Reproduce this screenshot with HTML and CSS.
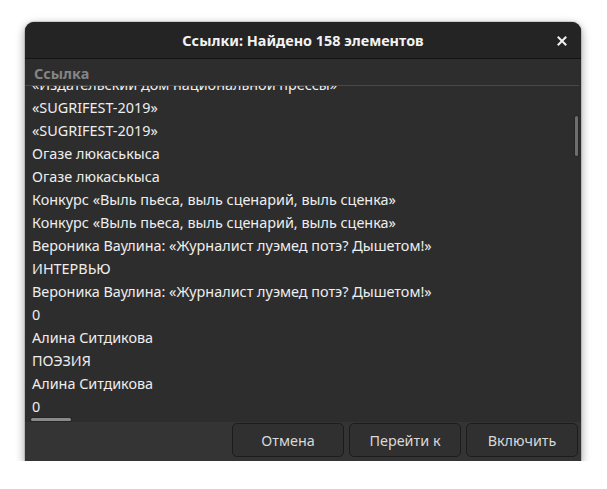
FILE: index.html
```html
<!DOCTYPE html>
<html lang="ru">
<head>
<meta charset="utf-8">
<title>Ссылки</title>
<link rel="stylesheet" href="styles.css">
</head>
<body>
<div class="dialog">
  <div class="titlebar">
    <span class="title">Ссылки: Найдено 158 элементов</span>
    <span class="close">
      <svg width="10" height="10" viewBox="0 0 10 10"><path d="M1.5 1.5 L8.5 8.5 M8.5 1.5 L1.5 8.5" stroke="#f2f2f2" stroke-width="2" stroke-linecap="square"/></svg>
    </span>
  </div>
  <div class="colhead">Ссылка</div>
  <div class="listwrap">
    <div class="list">
      <div class="row">«Издательский дом национальной прессы»</div>
      <div class="row">«SUGRIFEST-2019»</div>
      <div class="row">«SUGRIFEST-2019»</div>
      <div class="row">Огазе люкаськыса</div>
      <div class="row">Огазе люкаськыса</div>
      <div class="row">Конкурс «Выль пьеса, выль сценарий, выль сценка»</div>
      <div class="row">Конкурс «Выль пьеса, выль сценарий, выль сценка»</div>
      <div class="row">Вероника Ваулина: «Журналист луэмед потэ? Дышетом!»</div>
      <div class="row">ИНТЕРВЬЮ</div>
      <div class="row">Вероника Ваулина: «Журналист луэмед потэ? Дышетом!»</div>
      <div class="row">0</div>
      <div class="row">Алина Ситдикова</div>
      <div class="row">ПОЭЗИЯ</div>
      <div class="row">Алина Ситдикова</div>
      <div class="row">0</div>
      <div class="row">Ольга Ирина Марина Зайцева</div>
    </div>
    <div class="vscroll"></div>
    <div class="hscroll"></div>
  </div>
  <div class="actions">
    <button class="btn">Отмена</button>
    <button class="btn">Перейти к</button>
    <button class="btn">Включить</button>
  </div>
</div>
</body>
</html>
```
FILE: styles.css
```css
html, body {
  margin: 0;
  padding: 0;
  background: #ffffff;
}
body {
  font-family: "Noto Sans", "Open Sans", "DejaVu Sans", sans-serif;
  font-size: 14.4px;
  color: #eeeeee;
}
.dialog {
  margin: 22px 0 0 25px;
  width: 556px;
  height: 439px;
  background: #2d2d2d;
  border-radius: 9px 9px 0 0;
  box-shadow: 0 3px 9px 1px rgba(0,0,0,0.35), 0 0 0 1px rgba(0,0,0,0.12);
  display: flex;
  flex-direction: column;
  overflow: hidden;
}
.titlebar {
  height: 36px;
  flex: none;
  background: #242424;
  border-bottom: 1px solid #141414;
  display: flex;
  align-items: center;
  justify-content: center;
  position: relative;
}
.title {
  font-weight: bold;
  font-size: 14.4px;
  color: #f2f2f2;
}
.close {
  position: absolute;
  right: 14px;
  top: 14px;
  width: 10px;
  height: 10px;
  display: block;
}
.close svg { display: block; }
.colhead {
  height: 26px;
  flex: none;
  margin-right: 2px;
  border-bottom: 1px solid #484848;
  box-sizing: content-box;
  padding-left: 9px;
  font-weight: bold;
  color: #848484;
  line-height: 29px;
}
.listwrap {
  height: 336px;
  flex: none;
  position: relative;
  overflow: hidden;
}
.list {
  margin-top: -13px;
  padding-left: 7px;
}
.row {
  height: 23px;
  line-height: 23px;
  white-space: nowrap;
}
.vscroll {
  position: absolute;
  left: 550px;
  top: 30px;
  width: 3px;
  height: 40px;
  background: #6e6e6e;
  border-radius: 2px;
  box-shadow: 0 0 0 1px #262626;
}
.hscroll {
  position: absolute;
  left: 6px;
  top: 332px;
  width: 40px;
  height: 3px;
  background: #8a8a8a;
  border-radius: 2px;
  box-shadow: 0 0 0 1px #262626;
}
.actions {
  flex: 1;
  background: #343434;
  display: flex;
  justify-content: flex-end;
  align-items: flex-start;
  gap: 5px;
  padding: 1px 3px 0 0;
}
.btn {
  width: 112px;
  height: 34px;
  background: #303030;
  border: 1px solid #1c1c1c;
  border-radius: 5px;
  color: #d8d8d8;
  font-family: inherit;
  font-size: 14.4px;
  padding: 0;
}
```
